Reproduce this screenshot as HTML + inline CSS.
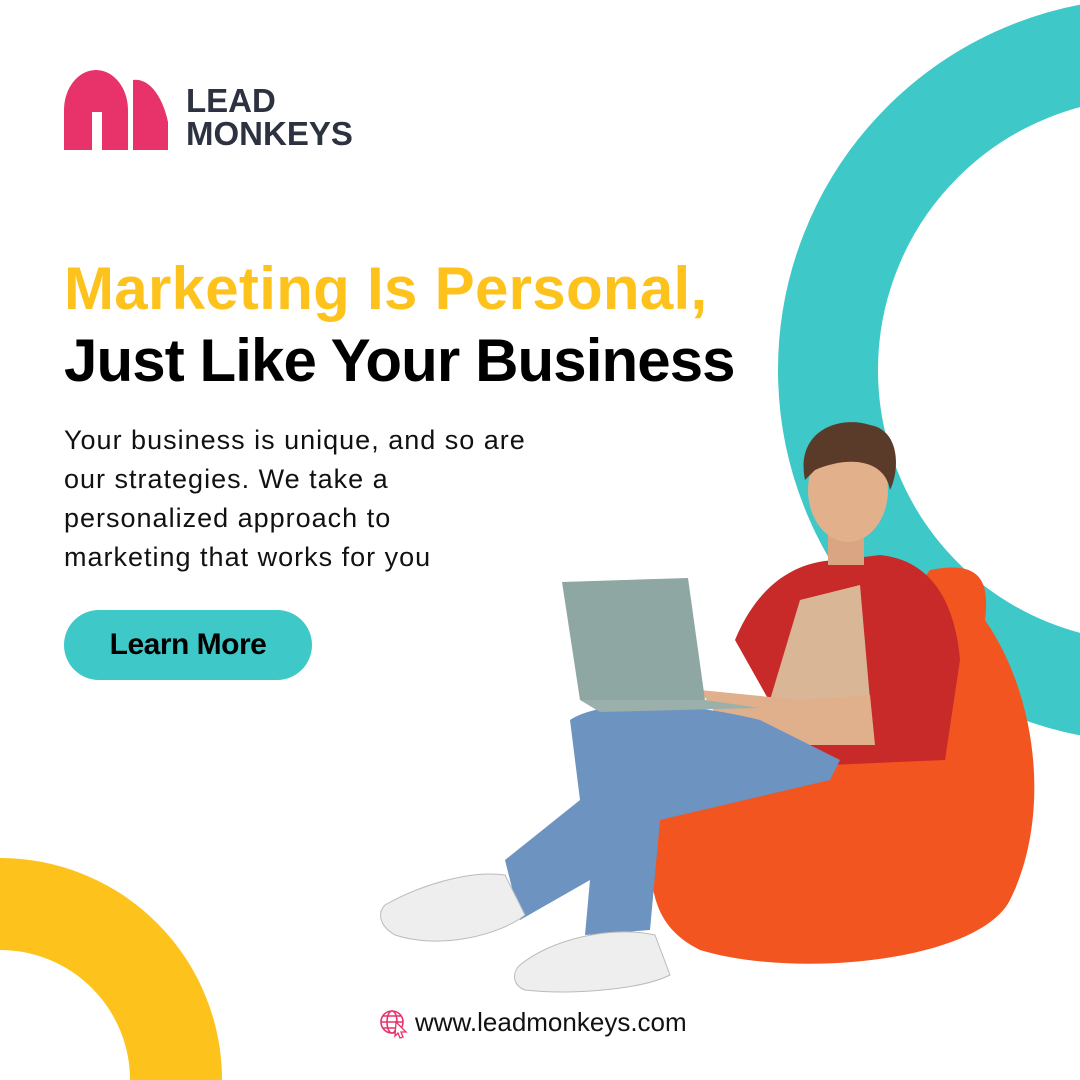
<!DOCTYPE html>
<html><head><meta charset="utf-8"><style>
html,body{margin:0;width:1080px;height:1080px;overflow:hidden}
body{background:#fff;position:relative;font-family:"Liberation Sans",sans-serif}
.abs{position:absolute}
svg{overflow:hidden;display:block}
.h{font-weight:700;font-size:60px;left:64px;white-space:nowrap}
</style></head><body>
<svg class="abs" style="left:0;top:0" width="1080" height="1080">
<circle cx="1150" cy="370" r="322" fill="none" stroke="#3ec8c8" stroke-width="100"/>
<circle cx="0" cy="1080" r="176" fill="none" stroke="#fdc21c" stroke-width="92"/>
<path d="M64 150 V110 A32 40 0 0 1 128 110 V150 H102 V112 H92 V150 Z" fill="#e8336a"/>
<path d="M133 150 V80 A35 70 0 0 1 168 122 V150 Z" fill="#e8336a"/>
<path d="M650 850 C640 760 720 700 830 700 L930 570 C980 560 990 580 985 620 C1040 700 1050 820 1010 900 C980 960 800 980 700 950 C660 930 650 900 650 850Z" fill="#f2551f"/>
<path d="M735 640 C760 580 800 560 840 560 L880 555 C930 560 955 600 960 660 L945 760 L830 765 L780 720 Z" fill="#c82a2a"/>
<path d="M800 600 L860 585 L870 700 L770 700 Z" fill="#d8b696"/>
<path d="M700 690 L800 700 L870 695 L875 745 L800 745 L720 720Z" fill="#e0b08c"/>
<path d="M570 720 C600 700 680 700 760 720 L840 760 L830 780 L660 820 L650 930 L585 935 L590 880 L520 920 L505 860 L580 800 Z" fill="#6d93c0"/>
<path d="M562 582 L688 578 L705 700 L580 700 Z" fill="#8ea7a2"/>
<path d="M580 700 L705 700 L760 708 L600 712 Z" fill="#9bb0ab"/>
<path d="M385 905 C420 885 470 870 505 875 L525 915 C500 935 440 950 395 935 C378 925 378 912 385 905Z" fill="#eee" stroke="#bbb"/>
<path d="M520 965 C550 940 610 925 655 935 L670 975 C640 990 570 995 525 990 C512 985 512 972 520 965Z" fill="#eee" stroke="#bbb"/>
<rect x="828" y="535" width="36" height="30" fill="#d9a582"/>
<ellipse cx="848" cy="490" rx="40" ry="52" fill="#e3b08c"/>
<path d="M805 480 C795 430 840 415 870 425 C900 430 900 470 890 490 C885 460 850 455 815 470 Z" fill="#5a3a28"/>
<g fill="none" stroke="#e8336a" stroke-width="1.6"><circle cx="392" cy="1022" r="11"/><ellipse cx="392" cy="1022" rx="5" ry="11"/><path d="M381 1022H403M383 1016H401M383 1028H401"/></g>
<path d="M396 1022 L406 1032 L401 1032 L403 1037 L400 1038 L398 1033 L395 1036Z" fill="#fff" stroke="#e8336a" stroke-width="1.3"/>
</svg>
<div class="abs" style="left:186px;top:84px;font-size:33px;font-weight:700;color:#2c3240;line-height:33px">LEAD<br>MONKEYS</div>
<div class="abs h" style="top:254px;color:#fdc21c;letter-spacing:0.3px">Marketing Is Personal,</div>
<div class="abs h" style="top:326px;color:#000;letter-spacing:-0.9px">Just Like Your Business</div>
<div class="abs" style="left:64px;top:421px;font-size:27px;line-height:39px;color:#111;letter-spacing:1px;white-space:nowrap">Your business is unique, and so are<br>our strategies. We take a<br>personalized approach to<br>marketing that works for you</div>
<div class="abs" style="left:64px;top:610px;width:248px;height:70px;border-radius:35px;background:#3ec8c8;color:#000;font-weight:700;font-size:30px;line-height:70px;text-align:center;letter-spacing:-0.5px">Learn More</div>
<div class="abs" style="left:415px;top:1007px;font-size:26px;color:#111">www.leadmonkeys.com</div>
</body></html>
